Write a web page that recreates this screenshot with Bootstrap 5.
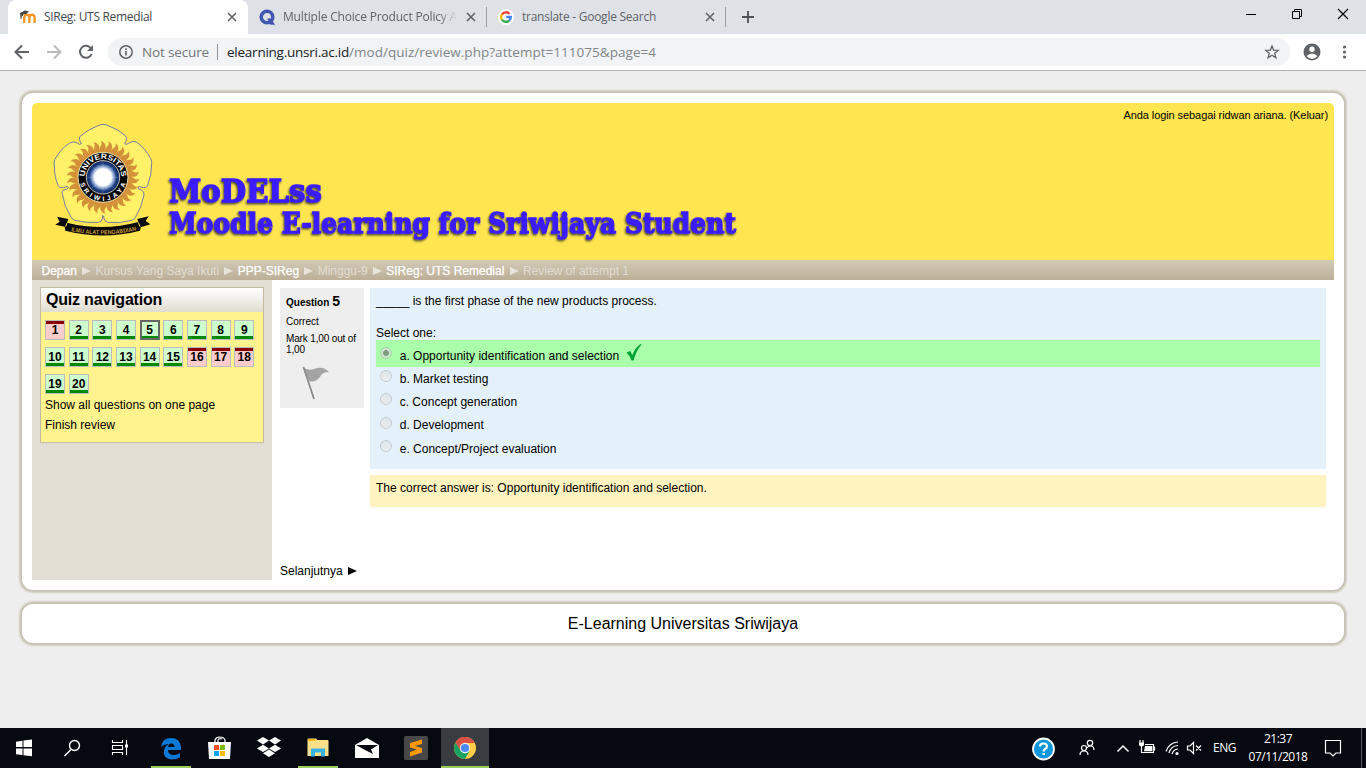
<!DOCTYPE html>
<html lang="id">
<head>
<meta charset="utf-8">
<title>SIReg: UTS Remedial</title>
<link rel="stylesheet" href="https://cdn.jsdelivr.net/npm/bootstrap@5.3.0/dist/css/bootstrap.min.css">
<style>
body{font:12px/16px "Liberation Sans",Arial,sans-serif;color:#000;background:#eee;height:768px;overflow:hidden}
svg{display:block;flex:none}
.chrome-ui{font-family:"Open Sans","Noto Sans",sans-serif;color:#5f6368}
.tabstrip{height:34px;background:#dee1e6;padding-left:8px}
.tab-item{height:34px;font-size:12px;line-height:34px;white-space:nowrap}
.tab-on{width:240px;background:#fff;border-radius:8px 8px 0 0;color:#45494d;padding-left:12px}
.tab-off{width:238px;padding-left:11px}
.tab-sep{width:1px;height:20px;background:#9a9ea3;margin-top:7px}
.tab-label{overflow:hidden}
.fade-end{width:174px;-webkit-mask-image:linear-gradient(90deg,#000 155px,transparent 174px)}
.toolbar{height:36px;background:#fff}
.omnibox{width:1182px;height:28px;border-radius:14px;background:#f1f3f4;font-size:14px;line-height:28px;color:#80868b}
.page-line{height:1px;background:#b4b4b4}
.content-area{height:657px;padding:22px 22px 0}
.frame-box{background:#fff;border-radius:11px;box-shadow:0 0 0 1px #c4c0b4,0 0 0 2px #ccc8bd,0 0 0 3px #d8d5cb,0 0 0 4px #e8e7e3}
.main-frame{height:497px;padding:10px}
.site-head{height:157px;background:#ffe650;border-radius:5px 5px 0 0}
.login-info{font-size:11px;right:6px;top:4px;letter-spacing:-.08px}
.crumbs{height:20px;background:linear-gradient(#d2cab8,#bcaf98);padding:1px 0 0 9.500px;line-height:20px;color:#e2ddd2;gap:4.300px}
.crumbs b{font-weight:400;color:#fff;-webkit-text-stroke:.25px #fff}
.side{width:240px;height:300px;background:#e2ded3;padding:7px 8px}
.quiz-block{height:156px;border:1px solid #c2b9a2;background:#fff38d}
.quiz-title{height:24px;background:linear-gradient(#fff,#e0dcd0);font:bold 16px/24px "Liberation Sans",sans-serif;padding-left:5px;letter-spacing:-.2px}
.qgrid{padding:8px 0 0 4px;gap:7px 3.67px}
.qb{width:20px;height:20px;border:1px solid #bbb;background:#cfc;font-weight:700;line-height:18px;text-align:center;box-shadow:inset 0 -3px #080}
.qb.bad{background:#fcc;box-shadow:inset 0 3px #800}
.qb.now{border:2px solid #666;line-height:16px;box-shadow:inset 0 -2px #080}
.side-link{padding-left:4px;line-height:20px;position:relative;top:1px}
.q-info{width:84px;height:120px;background:#eee;font-size:10px;line-height:11px;padding:5px 6px 6px}
.q-form{width:956px;height:181px;background:#e4f1fa;padding:5px 6px}
.q-feedback{width:956px;height:32px;background:#fff3bf;padding:5px 6px}
.ans{height:23.3px;padding-left:4px}
.ans span{margin-left:8px;position:relative;top:2px;left:-.3px}
.ans.right{height:27px;background:#afa;margin-bottom:-2px}
.ans i{width:12px;height:12px;border-radius:50%;border:1px solid #c4cbd0;background:linear-gradient(#dfe6ea,#e8edf0);margin-top:-1px}
.ans.right i{border-color:#a5cfa5;background:radial-gradient(circle,#7f9b7f 0 2.6px,#cfe6cf 3.2px);margin-top:-2px}
.foot{height:39px;margin-top:14px;font-size:16px;line-height:39px}
.taskbar{height:40px;background:#060a10;color:#fff;font-family:"Open Sans","Noto Sans",sans-serif}
.task-cell{width:49px;height:40px}
.task-open{box-shadow:inset 0 -2px #9ccc5a}
.task-active{background:#393d42}
</style>
</head>
<body class="d-flex flex-column">
<header class="chrome-ui">
  <div class="tabstrip d-flex">
    <div class="tab-item tab-on d-flex align-items-center">
      <svg width="17" height="14" viewBox="0 0 17 14"><path d="M4.200 13V7.500Q4.500 4.600 6.800 4.600T9.400 7.500V13M9.400 7.500Q9.700 4.600 12 4.600T14.600 7.500V13" fill="none" stroke="#f7931e" stroke-width="2.300"/><path d="M0 3L5 .5L9 1.5L6 4L3 4.5V6H2V3.5L1.5 9H.6Z" fill="#444"/></svg>
      <span class="tab-label" style="margin-left:7px;width:183px"><span id="t1">SIReg: UTS Remedial</span></span>
      <svg width="10" height="10" viewBox="0 0 10 10"><path d="M1 1L9 9M9 1L1 9" stroke="#5f6368" stroke-width="1.6"/></svg>
    </div>
    <div class="tab-item tab-off d-flex align-items-center">
      <svg width="17" height="17" viewBox="0 0 17 17"><circle cx="8" cy="8" r="5.800" fill="none" stroke="#4257b2" stroke-width="3.600"/><path d="M8 9.500H11.500L16.200 15.700H11.500Z" fill="#4257b2"/></svg>
      <span class="tab-label fade-end" style="margin-left:7px"><span id="t2">Multiple Choice Product Policy A</span></span>
      <svg width="10" height="10" viewBox="0 0 10 10" style="margin-left:9px"><path d="M1 1L9 9M9 1L1 9" stroke="#5f6368" stroke-width="1.6"/></svg>
    </div>
    <div class="tab-sep"></div>
    <div class="tab-item d-flex align-items-center" style="width:238px;padding-left:11px">
      <svg width="16" height="16" viewBox="0 0 16 16"><circle cx="8" cy="8" r="8" fill="#fff"/><g fill="none" stroke-width="2.4"><path d="M4 5.500A4.800 4.800 0 0 1 11.600 4.900" stroke="#ea4335"/><path d="M4 5.300A4.800 4.800 0 0 0 4 10.700" stroke="#fbbc05"/><path d="M3.900 10.500A4.800 4.800 0 0 0 11.300 11.500" stroke="#34a853"/><path d="M8.200 8H12.800A4.800 4.800 0 0 1 11.200 11.600" stroke="#4285f4"/></g></svg>
      <span class="tab-label" style="margin-left:8px;width:183px"><span id="t3">translate - Google Search</span></span>
      <svg width="10" height="10" viewBox="0 0 10 10"><path d="M1 1L9 9M9 1L1 9" stroke="#5f6368" stroke-width="1.6"/></svg>
    </div>
    <div class="tab-sep"></div>
    <svg width="12" height="12" viewBox="0 0 12 12" style="margin:11px 0 0 16px"><path d="M6 0V12M0 6H12" stroke="#4d5156" stroke-width="1.8"/></svg>
    <svg class="ms-auto" width="120" height="34" viewBox="0 0 120 34"><g fill="none" stroke="#000"><path d="M0 14.500H10M46.500 11.500H53.500V18.500H46.500ZM48.500 11V9.500H55.500V16.500H54"/><path d="M92 9L102 19M102 9L92 19" stroke-width="1.200"/></g></svg>
  </div>
  <div class="toolbar d-flex align-items-center">
    <svg width="108" height="36" viewBox="0 0 108 36"><g fill="none" stroke-width="2"><path d="M29 18H16M22 11.500L15.500 18L22 24.500" stroke="#5f6368"/><path d="M47 18H60M54 11.500L60.500 18L54 24.500" stroke="#babcbe"/><path d="M91 14.500A6 6 0 1 0 91.600 20" stroke="#5f6368"/></g><path d="M93 11V17H87Z" fill="#5f6368"/></svg>
    <div class="omnibox d-flex align-items-center">
      <svg width="16" height="16" viewBox="0 0 16 16" style="margin-left:10px"><circle cx="8" cy="8" r="6.200" fill="none" stroke="#5f6368" stroke-width="1.500"/><path d="M8 7V11.500M8 4.300V5.900" stroke="#5f6368" stroke-width="1.600"/></svg>
      <span id="ns" style="margin-left:8px;width:75px;color:#72777c;white-space:nowrap;font-size:13.5px">Not secure</span>
      <span style="width:1px;height:16px;background:#8c9094"></span>
      <span style="margin-left:9px;font-size:13.5px;white-space:nowrap"><span id="host" style="color:#202124">elearning.unsri.ac.id</span><span id="url">/mod/quiz/review.php?attempt=111075&amp;page=4</span></span>
      <svg class="ms-auto" width="16" height="16" viewBox="0 0 16 16" style="margin-right:10px"><path d="M8 2L9.600 6.100L14.200 6.400L10.700 9.300L11.900 13.800L8 11.300L4.100 13.800L5.300 9.300L1.800 6.400L6.400 6.100Z" fill="none" stroke="#5f6368" stroke-width="1.300"/></svg>
    </div>
    <svg width="76" height="36" viewBox="0 0 76 36"><circle cx="22" cy="18" r="8.500" fill="#5f6368"/><circle cx="22" cy="15.200" r="2.700" fill="#fff"/><path d="M16.500 22Q22 17 27.500 22Q25 25 22 25T16.500 22Z" fill="#fff"/><g fill="#5f6368"><circle cx="54.500" cy="13" r="1.600"/><circle cx="54.500" cy="18" r="1.600"/><circle cx="54.500" cy="23" r="1.600"/></g></svg>
  </div>
  <div class="page-line"></div>
</header>

<main class="content-area">
  <div class="frame-box main-frame">
    <div class="site-head position-relative">
      <svg width="740" height="157" viewBox="32 103 740 157">
        <defs><path id="arcTop" d="M119 187A55 55 0 0 1 229 187"/><path id="arcBot" d="M103 187A71 71 0 0 0 245 187"/>
        <path id="ribbonLine" d="M62 345Q174 372 288 343"/>
        <filter id="sh" x="-5%" y="-20%" width="110%" height="150%"><feDropShadow dx="-1" dy="1.500" stdDeviation="1" flood-color="#222" flood-opacity=".9"/></filter></defs>
        <g transform="translate(45 115) scale(.33333)">
          <path d="M174 28Q166 28 155 34Q128 44 105 64Q102 68 104 76L109 86Q104 91 98 85Q84 76 70 87Q48 101 29 134Q26 140 28 150Q28 188 40 212Q43 220 52 218L68 214Q73 218 67 222L54 226Q50 228 52 236Q56 272 78 306Q82 314 90 316Q126 325 160 322Q170 320 172 312L172 302Q177 300 177 310Q179 320 188 322Q224 326 260 316Q267 314 271 307Q290 278 297 240Q298 229 290 226L280 221Q276 215 284 215L296 218Q305 219 308 211Q320 180 320 146Q321 138 317 131Q300 98 274 81Q262 76 250 85Q243 91 239 86L244 76Q246 67 241 62Q218 42 192 33Q182 28 174 28Z" fill="#fff168" stroke="#5f68b4" stroke-width="2.600"/>
          <g id="sunRays" fill="#d3923a"></g>
          <circle cx="174" cy="187" r="75" fill="#080808" stroke="#eee5ae" stroke-width="3"/>
          <radialGradient id="sunGlow"><stop offset=".5" stop-color="#fff"/><stop offset=".68" stop-color="#7c97c8"/><stop offset=".82" stop-color="#193b80"/><stop offset="1" stop-color="#12295c"/></radialGradient>
          <circle cx="174" cy="187" r="50" fill="url(#sunGlow)" stroke="#e7e3cf" stroke-width="2.500"/>
          <path d="M174 139V235M126 187H222M140 153L208 221M208 153L140 221" stroke="#cbdaf0" stroke-width="1" opacity=".7"/>
          <circle cx="174" cy="187" r="25" fill="#fff"/>
          <g font-family="Liberation Sans" font-weight="700" font-size="23" fill="#fff"><text><textPath href="#arcTop" startOffset="2" textLength="169" lengthAdjust="spacingAndGlyphs">UNIVERSITAS</textPath></text><text font-size="20"><textPath href="#arcBot" startOffset="19" textLength="185">SRIWIJAYA</textPath></text></g>
          <path d="M36 305L70 312L66 323Q174 350 280 321L277 312L311 304L302 318L316 328L287 337L285 347Q174 376 61 347L59 335L31 329L44 320Z" fill="#080808"/>
          <path d="M66 324L62 335M280 322L285 335" stroke="#ffe650" stroke-width="3"/>
          <text font-family="Liberation Sans" font-weight="700" font-size="18" fill="#c99a2a"><textPath href="#ribbonLine" startOffset="16" textLength="198" lengthAdjust="spacingAndGlyphs">ILMU ALAT PENGABDIAN</textPath></text>
        </g>
        <g font-family="DejaVu Serif" font-weight="700" fill="#3a1cff" stroke="#3a1cff" stroke-width="1.300" filter="url(#sh)">
          <text x="169" y="201.500" font-size="31.500" textLength="153" lengthAdjust="spacingAndGlyphs">MoDELss</text>
          <text x="169" y="232.500" font-size="28" textLength="567" lengthAdjust="spacingAndGlyphs">Moodle E-learning for Sriwijaya Student</text>
        </g>
      </svg>
      <div class="login-info position-absolute">Anda login sebagai ridwan ariana. (Keluar)</div>
    </div>
    <nav class="crumbs d-flex align-items-center">
      <b>Depan</b><svg width="10" height="8"><path d="M1 0L10 4L1 8Z" fill="#e8e4da"/></svg>
      <span>Kursus Yang Saya Ikuti</span><svg width="10" height="8"><path d="M1 0L10 4L1 8Z" fill="#e8e4da"/></svg>
      <b>PPP-SIReg</b><svg width="10" height="8"><path d="M1 0L10 4L1 8Z" fill="#e8e4da"/></svg>
      <span>Minggu-9</span><svg width="10" height="8"><path d="M1 0L10 4L1 8Z" fill="#e8e4da"/></svg>
      <b>SIReg: UTS Remedial</b><svg width="10" height="8"><path d="M1 0L10 4L1 8Z" fill="#e8e4da"/></svg>
      <span>Review of attempt 1</span>
    </nav>
    <div class="d-flex">
      <aside class="side">
        <div class="quiz-block">
          <div class="quiz-title">Quiz navigation</div>
          <div class="qgrid d-flex flex-wrap">
            <div class="qb bad">1</div><div class="qb">2</div><div class="qb">3</div><div class="qb">4</div><div class="qb now">5</div><div class="qb">6</div><div class="qb">7</div><div class="qb">8</div><div class="qb">9</div>
            <div class="qb">10</div><div class="qb">11</div><div class="qb">12</div><div class="qb">13</div><div class="qb">14</div><div class="qb">15</div><div class="qb bad">16</div><div class="qb bad">17</div><div class="qb bad">18</div>
            <div class="qb">19</div><div class="qb">20</div>
          </div>
          <div class="side-link">Show all questions on one page</div>
          <div class="side-link">Finish review</div>
        </div>
      </aside>
      <section class="d-flex flex-column ps-2 pt-2">
        <div class="d-flex" style="gap:6px">
          <div class="q-info">
            <div class="fw-bold" style="line-height:16px">Question <span style="font-size:14px">5</span></div>
            <div style="margin-top:5px">Correct</div>
            <div style="margin-top:6px;white-space:nowrap;letter-spacing:-.15px">Mark 1,00 out of<br>1,00</div>
            <svg width="32" height="34" viewBox="0 0 32 34" style="margin:11px 0 0 16px"><path d="M1 1Q5 5 12 3Q21-.5 27 6Q20 6 18 11Q13 17 7 15Z" fill="#a3a3a3"/><path d="M1.500 1L12 33" stroke="#8a8a8a" stroke-width="1.800"/></svg>
          </div>
          <div>
            <div class="q-form">
              <div>_____ is the first phase of the new products process.</div>
              <div style="margin-top:16px;margin-bottom:-1px">Select one:</div>
              <div class="ans right d-flex align-items-center"><i></i><span>a. Opportunity identification and selection</span>
                <svg width="16" height="17" viewBox="0 0 16 17" style="margin:-3px 0 0 7px"><path d="M.5 8.500L4 7L6.500 11Q9 4 14.500 0L15.500 .5Q10 7 7.500 16.500H5.500Q3.500 11 .5 8.500Z" fill="#00a236"/></svg></div>
              <div class="ans d-flex align-items-center"><i></i><span>b. Market testing</span></div>
              <div class="ans d-flex align-items-center"><i></i><span>c. Concept generation</span></div>
              <div class="ans d-flex align-items-center"><i></i><span>d. Development</span></div>
              <div class="ans d-flex align-items-center"><i></i><span>e. Concept/Project evaluation</span></div>
            </div>
            <div class="q-feedback" style="margin-top:6px">The correct answer is: Opportunity identification and selection.</div>
          </div>
        </div>
        <div class="d-flex align-items-center" style="margin-top:56px">Selanjutnya<svg width="10" height="8" style="margin-left:4px"><path d="M1 0L10 4L1 8Z"/></svg></div>
      </section>
    </div>
  </div>
  <footer class="frame-box foot text-center">E-Learning Universitas Sriwijaya</footer>
</main>

<footer class="taskbar d-flex">
  <svg width="151" height="40" viewBox="0 0 151 40"><path d="M16 13.700L22.500 12.800V19H16ZM23.500 12.600L32 11.500V19H23.500ZM16 20.500H22.500V27L16 26.200ZM23.500 20.500H32V28.300L23.500 27.200Z" fill="#fff"/><g fill="none" stroke="#fff" stroke-width="1.400"><circle cx="74.500" cy="17.500" r="5"/><path d="M71 21.500L64.500 28"/></g><path d="M112.500 12V14.500H122.500V12M112.500 27V24.500H122.500V27M112.500 17.500H122.500V21.500H112.500ZM126.500 12V27" fill="none" stroke="#fff" stroke-width="1.100"/><path d="M125 16.500H128V19.500H125Z" fill="#fff"/></svg>
  <div class="task-cell task-open d-flex justify-content-center align-items-center" style="width:40px"><svg width="22" height="23" viewBox="0 0 22 23"><path d="M1 10Q2 1 11 1Q20 1 21 10V13H8Q8 18 14 18Q17 18 20 16V20.500Q16 22.500 12 22.500Q3 22 4 14Q4.500 9 9 7Q4 7 1 10ZM8 10H14.500Q14.500 6.500 11.500 6.500Q8.500 6.500 8 10Z" fill="#0a78d6"/></svg></div>
  <svg width="107" height="40" viewBox="191 0 107 40"><path d="M208 14H231L230 31H209Z" fill="#fff"/><path d="M215 15V12Q216 9 219.500 9Q224 9 225 12V15M218 15V12Q219 10 222 11" fill="none" stroke="#fff" stroke-width="1.200"/><path d="M214 17H219V22H214Z" fill="#f25022"/><path d="M220 17H225V22H220Z" fill="#7fba00"/><path d="M214 23H219V28H214Z" fill="#00a4ef"/><path d="M220 23H225V28H220Z" fill="#ffb900"/><path d="M263 9L269 12.500L263 16.500L257 12.500ZM275 9L281 12.500L275 16.500L269 12.500ZM263 16.800L269 20.500L263 24L257 20.500ZM275 16.800L281 20.500L275 24L269 20.500ZM269 21.500L275 25.200L269 29L263 25.200Z" fill="#fff"/></svg>
  <div class="task-cell task-open d-flex justify-content-center" style="width:40px"><svg width="22" height="20" viewBox="0 0 22 20" style="margin-top:10px"><path d="M.5 1.500Q.5 .5 1.500 .5H9L10.500 2H20.500Q21.500 2 21.500 3V18H.5Z" fill="#ffe08a"/><path d="M1 1H9L8 3H1Z" fill="#f5b91e"/><path d="M4 18.500V10.500H18V18.500H14V14.500H8V18.500Z" fill="#39b3e6"/></svg></div>
  <svg width="103" height="40" viewBox="338 0 103 40"><path d="M355 17L367 10L379 17V30H355Z" fill="#fff"/><path d="M356 17H378L371 21.500L373 26L366 22.500Z" fill="#060a10"/><rect x="404" y="8" width="24" height="24" rx="1.500" fill="#484848"/><path d="M410 15L422 11.500V16L415 18L422 20V24.500L410 28.500V24L417 21.500L410 19.500Z" fill="#ff9800"/></svg>
  <div class="task-cell task-open task-active d-flex justify-content-center align-items-center" style="width:48px"><svg width="22" height="22" viewBox="0 0 22 22"><circle cx="11" cy="11" r="11" fill="#ffcd46"/><path d="M11 11L1.500 5.500A11 11 0 0 0 11 22L15.500 14Z" fill="#1ba261"/><path d="M11 11V6H20.800A11 11 0 0 0 1.500 5.500L6.500 13.500Z" fill="#dd5144"/><circle cx="11" cy="11" r="5.200" fill="#f1f1f1"/><circle cx="11" cy="11" r="4.100" fill="#4a8af4"/></svg></div>
  <svg class="ms-auto" width="184" height="40" viewBox="1026 0 184 40"><circle cx="1043.500" cy="21" r="10.500" fill="#1296db" stroke="#fff" stroke-width="1.800"/><path d="M1040 18.500Q1040 15.500 1043.500 15.500T1047 18.500Q1047 20 1045 21Q1043.700 21.700 1043.700 23.500" fill="none" stroke="#fff" stroke-width="2.200"/><path d="M1042.500 25H1045V27H1042.500Z" fill="#fff"/><g fill="none" stroke="#fff" stroke-width="1.200"><circle cx="1090" cy="15" r="2.700"/><circle cx="1084" cy="20" r="2.500"/><path d="M1080 27Q1080 23 1084 23T1088 27M1087 20Q1088 18 1090.500 18Q1094 18 1094 22"/><path d="M1117.500 23.500L1123 18L1128.500 23.500" stroke-width="1.500"/><path d="M1145 16.500H1153.500V24.500H1143.500M1154.500 18.500V22.500"/><path d="M1140 12V15M1143 12V15M1141.500 18V24.500H1144"/><path d="M1166 23.500A13 13 0 0 1 1178 14M1169 25A10 10 0 0 1 1178 17.500M1172 26A7 7 0 0 1 1178 21"/><path d="M1187.500 18V22H1190L1193.500 25.500V14.500L1190 18ZM1196 17.500L1201 22.500M1201 17.500L1196 22.500"/></g><path d="M1139 14.500H1144V16.500Q1144 18.500 1141.500 18.500T1139 16.500ZM1145 18H1152.300V23.200H1144Z" fill="#fff"/><circle cx="1177" cy="25.500" r="1.600" fill="#fff"/></svg>
  <div style="width:30px;margin-left:3px;line-height:40px"><span id="eng">ENG</span></div>
  <div class="text-center" style="width:70px;line-height:18px;padding-top:2px"><span id="clk">21:37</span><br><span id="dat">07/11/2018</span></div>
  <svg width="53" height="40" viewBox="1313 0 53 40"><path d="M1325.500 12.500H1340.500V25H1336L1333 28L1330 25H1325.500Z" fill="none" stroke="#fff" stroke-width="1.200"/><path d="M1361.500 0V40" stroke="#555b61"/></svg>
</footer>
<script>
/* sun flames around the seal */
document.getElementById('sunRays').innerHTML = Array.from({length:30}, (_, i) =>
  `<path transform="rotate(${i*12} 174 187)" d="M164 118Q161 99 169 91Q172 85 167 78Q183 83 182 96Q180 104 184 118Z"/>`).join('');
/* Interface labels keep fixed widths whatever the font's own metrics are */
document.fonts.ready.then(() => {
  const w = {t1:108,t2:174,t3:134,ns:67,host:122,url:307,eng:23,clk:28,dat:59};
  for (const id in w) {
    const e = document.getElementById(id), r = document.createRange();
    r.selectNodeContents(e);
    e.style.letterSpacing = (w[id] - r.getBoundingClientRect().width) / e.textContent.length + 'px';
  }
});
</script>
<script src="https://cdn.jsdelivr.net/npm/bootstrap@5.3.0/dist/js/bootstrap.bundle.min.js"></script>
</body>
</html>
